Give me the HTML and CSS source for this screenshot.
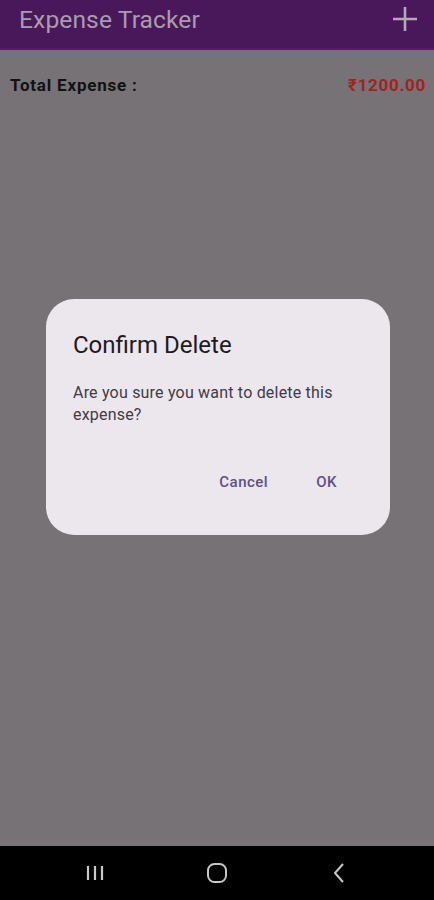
FILE: index.html
```html
<!DOCTYPE html>
<html>
<head>
<meta charset="utf-8">
<link rel="stylesheet" href="styles.css">
</head>
<body>
<div class="screen">
  <header class="appbar">
    <span class="app-title">Expense Tracker</span>
    <svg class="plus" width="26" height="26" viewBox="0 0 26 26"><path d="M13 1v24M1 13h24" stroke="#b3a9b7" stroke-width="2.6" fill="none"/></svg>
  </header>
  <main class="content">
    <div class="total-row">
      <span class="total-label">Total Expense :</span>
      <span class="total-value">₹1200.00</span>
    </div>
    <div class="dialog-wrap">
      <div class="dialog">
        <h2 class="dialog-title">Confirm Delete</h2>
        <p class="dialog-text">Are you sure you want to delete this expense?</p>
        <div class="dialog-actions">
          <span class="btn">Cancel</span>
          <span class="btn">OK</span>
        </div>
      </div>
    </div>
  </main>
  <nav class="navbar">
    <svg width="18" height="16" viewBox="0 0 18 16"><path d="M2 1v14M9 1v14M16 1v14" stroke="#c8c8c8" stroke-width="2.2"/></svg>
    <svg width="22" height="22" viewBox="0 0 22 22"><rect x="2" y="2" width="18" height="18" rx="6.5" fill="none" stroke="#c8c8c8" stroke-width="2"/></svg>
    <svg width="14" height="22" viewBox="0 0 14 22"><path d="M11 2L3 11l8 9" fill="none" stroke="#c8c8c8" stroke-width="2"/></svg>
  </nav>
</div>
</body>
</html>
```
FILE: styles.css
```css
html, body { margin: 0; padding: 0; }
body { font-family: Roboto, "Noto Sans", sans-serif; background: #767276; }
.screen { width: 434px; height: 900px; display: flex; flex-direction: column; overflow: hidden; }
.appbar {
  height: 48px; flex: none; background: #48185a; border-bottom: 2px solid #5b1572;
  display: flex; align-items: center; justify-content: space-between; padding: 0 16px 0 19px;
  box-sizing: content-box;
}
.app-title { color: #a99cad; font-size: 24.6px; margin-top: -10px; letter-spacing: 0.1px; }
.plus { margin-top: -10px; }
.content { flex: 1; background: #767276; display: flex; flex-direction: column; }
.total-row { display: flex; justify-content: space-between; padding: 25px 8px 0 10px; font-weight: bold; font-size: 17px; letter-spacing: 0.7px; }
.total-label { color: #121212; letter-spacing: 0.8px; }
.total-value { color: #a1241d; }
.dialog-wrap { flex: 1; display: flex; justify-content: center; padding: 204px 0 0 2px; }
.dialog {
  width: 344px; height: 236px; box-sizing: border-box; background: #ece6ed; border-radius: 28px;
  padding: 30px 20px 0 27px; display: flex; flex-direction: column;
}
.dialog-title { margin: 0; font-weight: normal; font-size: 24px; color: #1d1b20; line-height: 32px; }
.dialog-text { margin: 21px 0 0; font-size: 16px; line-height: 22px; color: #3f3c44; letter-spacing: 0.2px; }
.dialog-actions { display: flex; justify-content: flex-end; gap: 48px; margin-top: 47px; padding-right: 33px; }
.btn { color: #5e4f8c; font-size: 15px; font-weight: 500; letter-spacing: 0.5px; }
.navbar { height: 54px; flex: none; background: #000; display: grid; grid-template-columns: repeat(3, 122px); justify-content: center; justify-items: center; align-items: center; padding-left: 0; }
```
